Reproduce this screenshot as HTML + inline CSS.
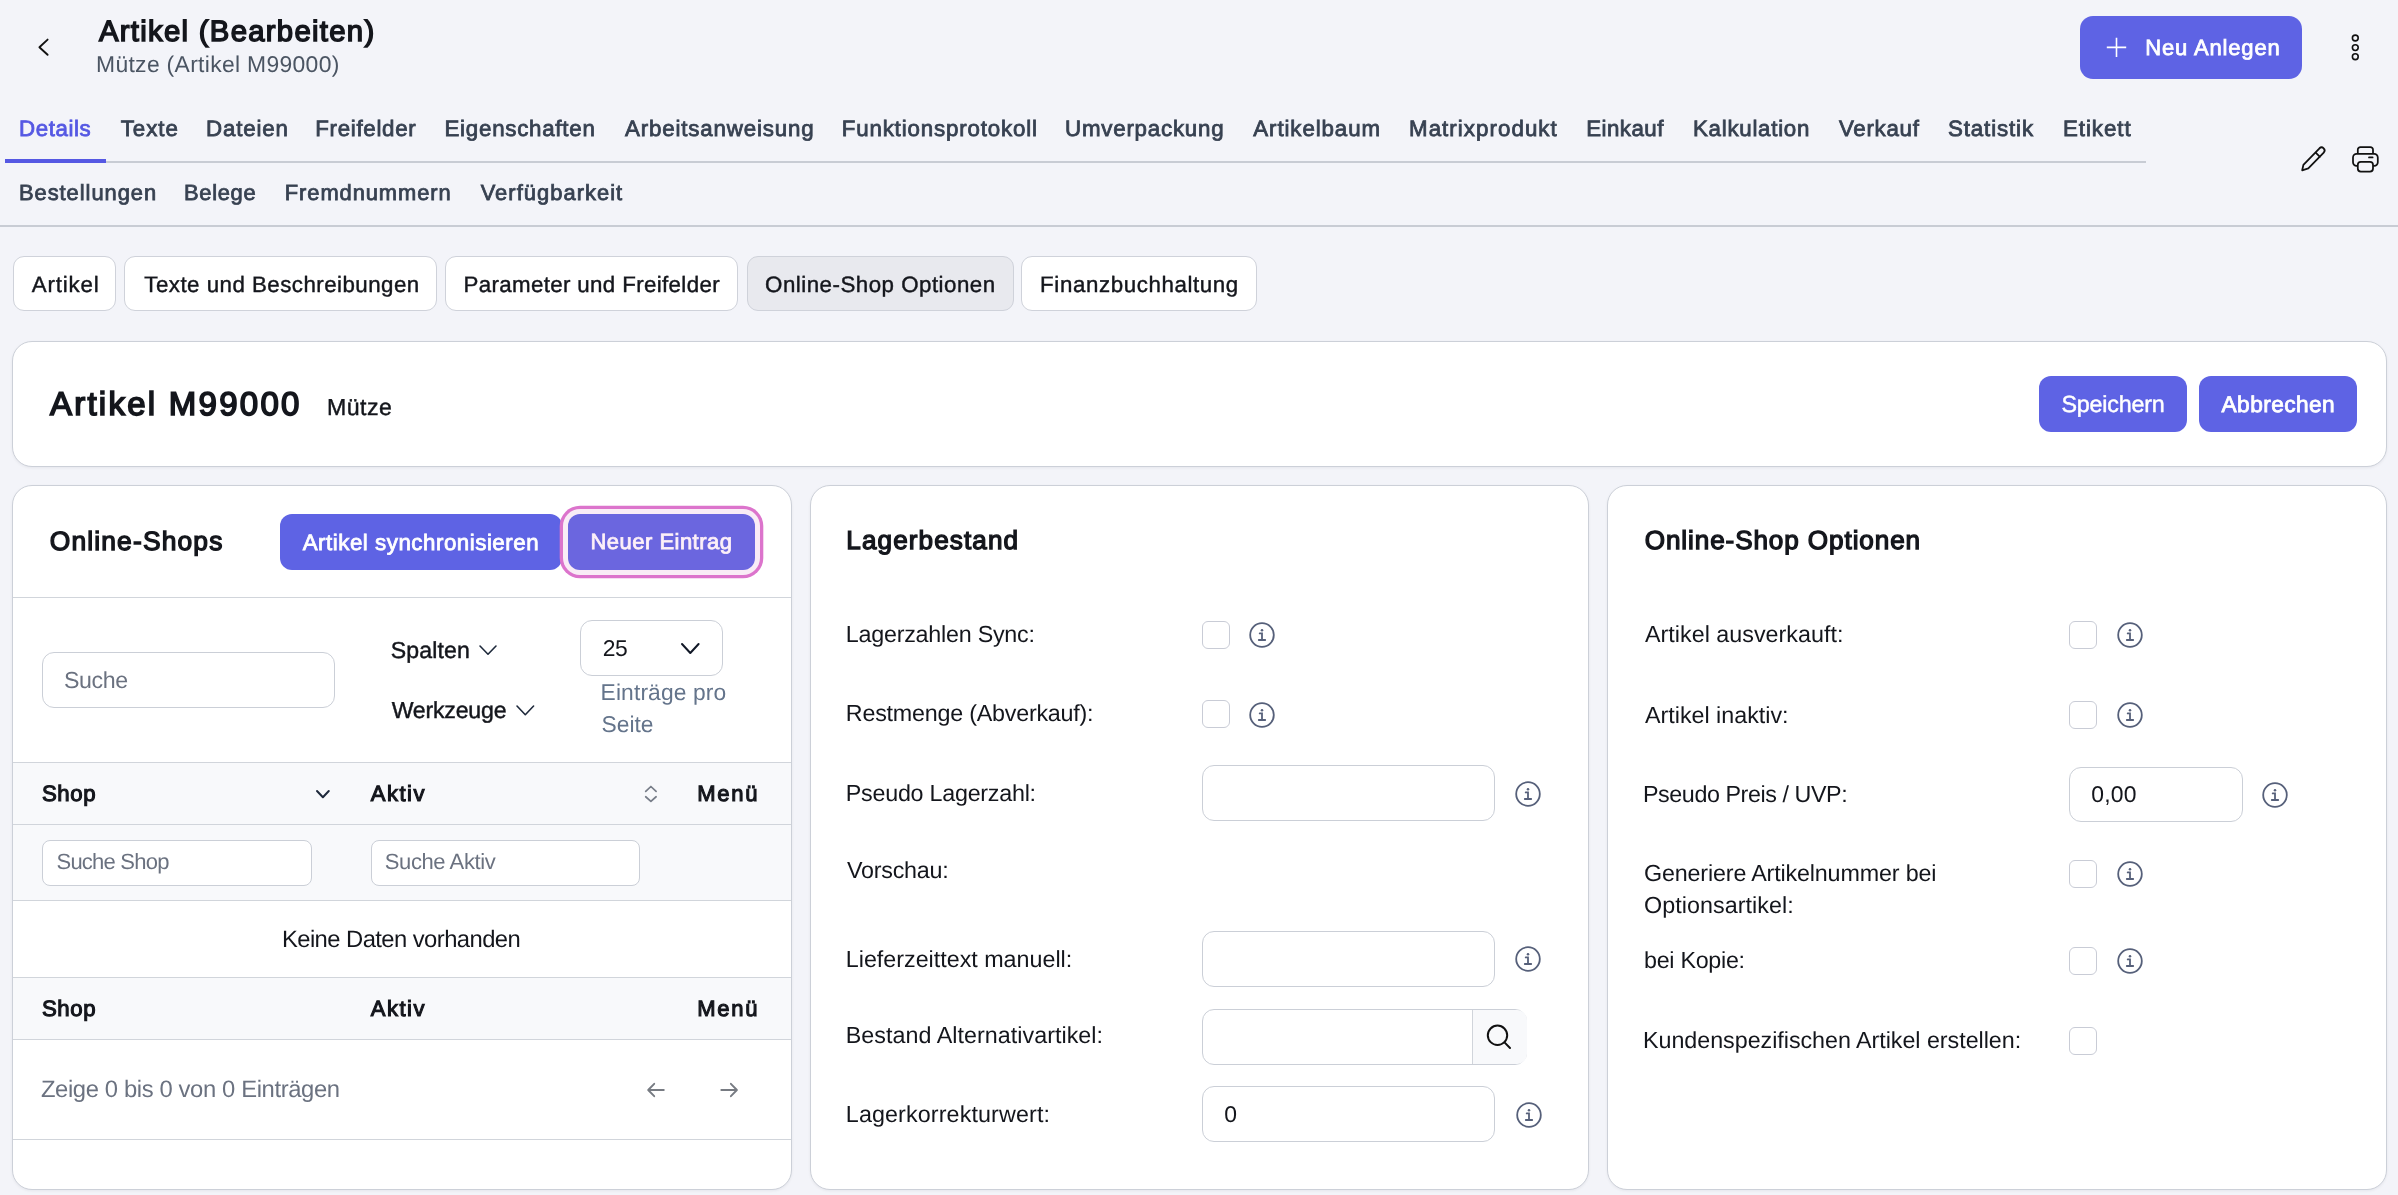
<!DOCTYPE html>
<html><head><meta charset="utf-8"><title>Artikel (Bearbeiten)</title>
<style>
html,body{margin:0;padding:0}
body{width:2398px;height:1195px;overflow:hidden;position:relative;background:#f3f4f9;font-family:'Liberation Sans', sans-serif}
.t{position:absolute;white-space:nowrap;text-rendering:geometricPrecision}
svg{overflow:visible}
</style></head><body>
<svg style="position:absolute;left:30px;top:30px;" width="30" height="34" viewBox="0 0 30 34" fill="none"><polyline points="17.6,9.6 9.4,17.2 17.6,24.8" stroke="#111" stroke-width="1.9" stroke-linecap="round" stroke-linejoin="round"/></svg>
<div style="position:absolute;left:2080px;top:16px;width:222px;height:63px;background:#5e63e4;border-radius:13px"></div>
<svg style="position:absolute;left:2100px;top:30px;" width="34" height="34" viewBox="0 0 34 34" fill="none"><path d="M16.5 7.8V27M6.8 17.4H26.2" stroke="#fff" stroke-width="1.6"/></svg>
<svg style="position:absolute;left:2340px;top:26px;" width="30" height="40" viewBox="0 0 30 40" fill="none"><circle cx="15.3" cy="12" r="2.9" stroke="#111" stroke-width="1.6"/><circle cx="15.3" cy="21.6" r="2.9" stroke="#111" stroke-width="1.6"/><circle cx="15.3" cy="30.7" r="2.9" stroke="#111" stroke-width="1.6"/></svg>
<div style="position:absolute;left:5px;top:161px;width:2141px;height:2px;background:#c8ccd4"></div>
<div style="position:absolute;left:5px;top:159px;width:101px;height:4px;background:#5558e3"></div>
<div style="position:absolute;left:0px;top:225px;width:2398px;height:2px;background:#c8ccd4"></div>
<svg style="position:absolute;left:2290px;top:140px;" width="40" height="40" viewBox="0 0 40 40" fill="none"><path d="M29.48 8.28L13.4 24.9L12.2 30.3L18.3 28.4L33.72 12.52A3 3 0 0 0 29.48 8.28ZM25.68 12.58L29.92 16.82" stroke="#111" stroke-width="1.8" stroke-linejoin="round" stroke-linecap="round"/></svg>
<svg style="position:absolute;left:2348px;top:141px;" width="36" height="36" viewBox="0 0 36 36" fill="none"><path d="M9.8 13V8.8a2.6 2.6 0 0 1 2.6-2.6h10a2.6 2.6 0 0 1 2.6 2.6V13" stroke="#111" stroke-width="1.75"/><path d="M9.6 24.9H8.6a3.6 3.6 0 0 1-3.6-3.6v-4.8a3.6 3.6 0 0 1 3.6-3.6h17.6a3.6 3.6 0 0 1 3.6 3.6v4.8a3.6 3.6 0 0 1-3.6 3.6h-1" stroke="#111" stroke-width="1.75"/><rect x="9.8" y="20.8" width="15.2" height="9.7" rx="3" stroke="#111" stroke-width="1.75"/><path d="M21 16.4h3.6" stroke="#111" stroke-width="1.75" stroke-linecap="round"/></svg>
<div style="position:absolute;left:12.5px;top:256.3px;width:103.9px;height:55.1px;box-sizing:border-box;border:1px solid #cfd2da;border-radius:11px;background:#fff"></div>
<div style="position:absolute;left:124.3px;top:256.3px;width:313.1px;height:55.1px;box-sizing:border-box;border:1px solid #cfd2da;border-radius:11px;background:#fff"></div>
<div style="position:absolute;left:445.3px;top:256.3px;width:293.2px;height:55.1px;box-sizing:border-box;border:1px solid #cfd2da;border-radius:11px;background:#fff"></div>
<div style="position:absolute;left:746.9px;top:256.3px;width:266.8px;height:55.1px;box-sizing:border-box;border:1px solid #cfd2da;border-radius:11px;background:#e8e9ee"></div>
<div style="position:absolute;left:1021.4px;top:256.3px;width:235.2px;height:55.1px;box-sizing:border-box;border:1px solid #cfd2da;border-radius:11px;background:#fff"></div>
<div style="position:absolute;left:12px;top:341px;width:2375px;height:126px;box-sizing:border-box;border:1px solid #ccd0d8;border-radius:20px;background:#fff;box-shadow:0 1px 3px rgba(16,24,40,0.06)"></div>
<div style="position:absolute;left:2039px;top:376px;width:148px;height:56px;background:#5e63e4;border-radius:12px"></div>
<div style="position:absolute;left:2199px;top:376px;width:158px;height:56px;background:#5e63e4;border-radius:12px"></div>
<div style="position:absolute;left:12px;top:485px;width:780px;height:705px;box-sizing:border-box;border:1px solid #ccd0d8;border-radius:20px;background:#fff;box-shadow:0 1px 3px rgba(16,24,40,0.06)"></div>
<div style="position:absolute;left:810px;top:485px;width:779px;height:705px;box-sizing:border-box;border:1px solid #ccd0d8;border-radius:20px;background:#fff;box-shadow:0 1px 3px rgba(16,24,40,0.06)"></div>
<div style="position:absolute;left:1607px;top:485px;width:780px;height:705px;box-sizing:border-box;border:1px solid #ccd0d8;border-radius:20px;background:#fff;box-shadow:0 1px 3px rgba(16,24,40,0.06)"></div>
<div style="position:absolute;left:280px;top:514px;width:281.5px;height:56px;background:#5e63e4;border-radius:12px"></div>
<div style="position:absolute;left:568px;top:514px;width:187px;height:56px;background:#6b66df;border-radius:12px;box-shadow:0 0 0 5px #f9ecf6,0 0 0 8.3px #dc74cc"></div>
<div style="position:absolute;left:13px;top:597px;width:778px;height:1px;background:#d1d5db"></div>
<div style="position:absolute;left:42.3px;top:652.3px;width:292.7px;height:56.2px;box-sizing:border-box;border:1px solid #cbcfd7;border-radius:12px;background:#fff"></div>
<svg style="position:absolute;left:477.5px;top:644.3px;" width="20" height="12.2" viewBox="0 0 20 12.2" fill="none"><polyline points="2,2 10.0,10.2 18,2" stroke="#1e293b" stroke-width="1.6" stroke-linecap="round" stroke-linejoin="round"/></svg>
<svg style="position:absolute;left:514.6px;top:703.5px;" width="20.6" height="12.7" viewBox="0 0 20.6 12.7" fill="none"><polyline points="2,2 10.3,10.7 18.6,2" stroke="#1e293b" stroke-width="1.6" stroke-linecap="round" stroke-linejoin="round"/></svg>
<div style="position:absolute;left:580.4px;top:620px;width:142.3px;height:56px;box-sizing:border-box;border:1px solid #cbcfd7;border-radius:12px;background:#fff;border-radius:12px"></div>
<svg style="position:absolute;left:679.6px;top:641.8px;" width="20.6" height="13" viewBox="0 0 20.6 13" fill="none"><polyline points="2,2 10.3,11 18.6,2" stroke="#111827" stroke-width="2" stroke-linecap="round" stroke-linejoin="round"/></svg>
<div style="position:absolute;left:13px;top:762px;width:778px;height:1px;background:#d1d5db"></div>
<div style="position:absolute;left:13px;top:763px;width:778px;height:214px;background:#f8f9fb"></div>
<div style="position:absolute;left:13px;top:824px;width:778px;height:1px;background:#d1d5db"></div>
<div style="position:absolute;left:13px;top:900px;width:778px;height:1px;background:#d1d5db"></div>
<div style="position:absolute;left:13px;top:901px;width:778px;height:76px;background:#fff"></div>
<div style="position:absolute;left:13px;top:977px;width:778px;height:1px;background:#d1d5db"></div>
<div style="position:absolute;left:13px;top:978px;width:778px;height:61px;background:#f8f9fb"></div>
<div style="position:absolute;left:13px;top:1039px;width:778px;height:1px;background:#d1d5db"></div>
<div style="position:absolute;left:13px;top:1139px;width:778px;height:1px;background:#d1d5db"></div>
<svg style="position:absolute;left:315px;top:789px;" width="15.8" height="10.2" viewBox="0 0 15.8 10.2" fill="none"><polyline points="2,2 7.9,8.2 13.8,2" stroke="#1e293b" stroke-width="2" stroke-linecap="round" stroke-linejoin="round"/></svg>
<svg style="position:absolute;left:640px;top:781px;" width="22" height="26" viewBox="0 0 22 26" fill="none"><polyline points="5.7,10.4 10.9,5.5 16.1,10.4" stroke="#777d88" stroke-width="1.7" stroke-linecap="round" stroke-linejoin="round"/><polyline points="5.7,15.75 10.9,20.4 16.1,15.75" stroke="#777d88" stroke-width="1.7" stroke-linecap="round" stroke-linejoin="round"/></svg>
<div style="position:absolute;left:42.2px;top:840px;width:269.4px;height:45.6px;box-sizing:border-box;border:1px solid #cbcfd7;border-radius:12px;background:#fff;border-radius:8px"></div>
<div style="position:absolute;left:370.5px;top:840px;width:269.0px;height:45.6px;box-sizing:border-box;border:1px solid #cbcfd7;border-radius:12px;background:#fff;border-radius:8px"></div>
<svg style="position:absolute;left:640px;top:1076px;" width="30" height="28" viewBox="0 0 30 28" fill="none"><path d="M23.8 14H8.5M14.2 7.8L8.2 14l6 6.2" stroke="#777b82" stroke-width="1.9" stroke-linecap="round" stroke-linejoin="round"/></svg>
<svg style="position:absolute;left:714px;top:1076px;" width="30" height="28" viewBox="0 0 30 28" fill="none"><path d="M7.3 14H22.6M16.9 7.8L22.9 14l-6 6.2" stroke="#777b82" stroke-width="1.9" stroke-linecap="round" stroke-linejoin="round"/></svg>
<div style="position:absolute;left:1202px;top:621px;width:28px;height:28px;box-sizing:border-box;border:1.3px solid #c9ccd6;border-radius:6px;background:#fff"></div>
<svg style="position:absolute;left:1247.3px;top:620.2px;" width="30" height="30" viewBox="0 0 30 30" fill="none"><circle cx="15" cy="15" r="11.8" stroke="#56607a" stroke-width="1.8"/><circle cx="15" cy="10.2" r="1.25" fill="#56607a"/><path d="M12.7 13.4h2.3v6.6M11.8 20h6.4" stroke="#56607a" stroke-width="1.8" stroke-linecap="round"/></svg>
<div style="position:absolute;left:1202px;top:700.3px;width:28px;height:28.0px;box-sizing:border-box;border:1.3px solid #c9ccd6;border-radius:6px;background:#fff"></div>
<svg style="position:absolute;left:1247.3px;top:699.7px;" width="30" height="30" viewBox="0 0 30 30" fill="none"><circle cx="15" cy="15" r="11.8" stroke="#56607a" stroke-width="1.8"/><circle cx="15" cy="10.2" r="1.25" fill="#56607a"/><path d="M12.7 13.4h2.3v6.6M11.8 20h6.4" stroke="#56607a" stroke-width="1.8" stroke-linecap="round"/></svg>
<div style="position:absolute;left:1202.3px;top:765px;width:293.2px;height:56px;box-sizing:border-box;border:1px solid #cbcfd7;border-radius:12px;background:#fff"></div>
<svg style="position:absolute;left:1512.8px;top:779.2px;" width="30" height="30" viewBox="0 0 30 30" fill="none"><circle cx="15" cy="15" r="11.8" stroke="#56607a" stroke-width="1.8"/><circle cx="15" cy="10.2" r="1.25" fill="#56607a"/><path d="M12.7 13.4h2.3v6.6M11.8 20h6.4" stroke="#56607a" stroke-width="1.8" stroke-linecap="round"/></svg>
<div style="position:absolute;left:1202.3px;top:931px;width:293.2px;height:56px;box-sizing:border-box;border:1px solid #cbcfd7;border-radius:12px;background:#fff"></div>
<svg style="position:absolute;left:1512.8px;top:944.2px;" width="30" height="30" viewBox="0 0 30 30" fill="none"><circle cx="15" cy="15" r="11.8" stroke="#56607a" stroke-width="1.8"/><circle cx="15" cy="10.2" r="1.25" fill="#56607a"/><path d="M12.7 13.4h2.3v6.6M11.8 20h6.4" stroke="#56607a" stroke-width="1.8" stroke-linecap="round"/></svg>
<div style="position:absolute;left:1202.3px;top:1009px;width:324.4px;height:56px;box-sizing:border-box;border:1px solid #cbcfd7;border-radius:12px;background:#fff;overflow:hidden"></div>
<div style="position:absolute;left:1471.6px;top:1010px;width:54.1px;height:54px;background:#f8f9fb;border-top-right-radius:10px;border-bottom-right-radius:10px;border-left:1px solid #d1d5db"></div>
<svg style="position:absolute;left:1480px;top:1018px;" width="36" height="36" viewBox="0 0 36 36" fill="none"><circle cx="17.5" cy="17.3" r="9.7" stroke="#111" stroke-width="2"/><path d="M24.5 24.4l5.5 5.6" stroke="#111" stroke-width="2" stroke-linecap="round"/></svg>
<div style="position:absolute;left:1202.3px;top:1086px;width:293.2px;height:56px;box-sizing:border-box;border:1px solid #cbcfd7;border-radius:12px;background:#fff"></div>
<svg style="position:absolute;left:1513.5px;top:1100.2px;" width="30" height="30" viewBox="0 0 30 30" fill="none"><circle cx="15" cy="15" r="11.8" stroke="#56607a" stroke-width="1.8"/><circle cx="15" cy="10.2" r="1.25" fill="#56607a"/><path d="M12.7 13.4h2.3v6.6M11.8 20h6.4" stroke="#56607a" stroke-width="1.8" stroke-linecap="round"/></svg>
<div style="position:absolute;left:2069px;top:621px;width:28px;height:28px;box-sizing:border-box;border:1.3px solid #c9ccd6;border-radius:6px;background:#fff"></div>
<svg style="position:absolute;left:2114.7px;top:620.2px;" width="30" height="30" viewBox="0 0 30 30" fill="none"><circle cx="15" cy="15" r="11.8" stroke="#56607a" stroke-width="1.8"/><circle cx="15" cy="10.2" r="1.25" fill="#56607a"/><path d="M12.7 13.4h2.3v6.6M11.8 20h6.4" stroke="#56607a" stroke-width="1.8" stroke-linecap="round"/></svg>
<div style="position:absolute;left:2069px;top:701px;width:28px;height:28px;box-sizing:border-box;border:1.3px solid #c9ccd6;border-radius:6px;background:#fff"></div>
<svg style="position:absolute;left:2114.7px;top:700.2px;" width="30" height="30" viewBox="0 0 30 30" fill="none"><circle cx="15" cy="15" r="11.8" stroke="#56607a" stroke-width="1.8"/><circle cx="15" cy="10.2" r="1.25" fill="#56607a"/><path d="M12.7 13.4h2.3v6.6M11.8 20h6.4" stroke="#56607a" stroke-width="1.8" stroke-linecap="round"/></svg>
<div style="position:absolute;left:2069px;top:766.8px;width:173.5px;height:55.7px;box-sizing:border-box;border:1px solid #cbcfd7;border-radius:12px;background:#fff"></div>
<svg style="position:absolute;left:2259.9px;top:780.2px;" width="30" height="30" viewBox="0 0 30 30" fill="none"><circle cx="15" cy="15" r="11.8" stroke="#56607a" stroke-width="1.8"/><circle cx="15" cy="10.2" r="1.25" fill="#56607a"/><path d="M12.7 13.4h2.3v6.6M11.8 20h6.4" stroke="#56607a" stroke-width="1.8" stroke-linecap="round"/></svg>
<div style="position:absolute;left:2069px;top:860.2px;width:28px;height:28.0px;box-sizing:border-box;border:1.3px solid #c9ccd6;border-radius:6px;background:#fff"></div>
<svg style="position:absolute;left:2114.7px;top:859.2px;" width="30" height="30" viewBox="0 0 30 30" fill="none"><circle cx="15" cy="15" r="11.8" stroke="#56607a" stroke-width="1.8"/><circle cx="15" cy="10.2" r="1.25" fill="#56607a"/><path d="M12.7 13.4h2.3v6.6M11.8 20h6.4" stroke="#56607a" stroke-width="1.8" stroke-linecap="round"/></svg>
<div style="position:absolute;left:2069px;top:947.3px;width:28px;height:28.0px;box-sizing:border-box;border:1.3px solid #c9ccd6;border-radius:6px;background:#fff"></div>
<svg style="position:absolute;left:2114.7px;top:945.8px;" width="30" height="30" viewBox="0 0 30 30" fill="none"><circle cx="15" cy="15" r="11.8" stroke="#56607a" stroke-width="1.8"/><circle cx="15" cy="10.2" r="1.25" fill="#56607a"/><path d="M12.7 13.4h2.3v6.6M11.8 20h6.4" stroke="#56607a" stroke-width="1.8" stroke-linecap="round"/></svg>
<div style="position:absolute;left:2069px;top:1027.3px;width:28px;height:28.0px;box-sizing:border-box;border:1.3px solid #c9ccd6;border-radius:6px;background:#fff"></div>
<div id="tl" style="position:absolute;left:0;top:0;width:2398px;height:1195px;will-change:transform">
<div class="t" style="left:99px;top:17px;font-size:29.3px;line-height:29.3px;font-weight:400;-webkit-text-stroke-width:1.47px;color:#14161c;letter-spacing:1.284px">Artikel (Bearbeiten)</div>
<div class="t" style="left:96px;top:53px;font-size:22.9px;line-height:22.9px;font-weight:400;color:#4b5563;letter-spacing:0.319px">Mütze (Artikel M99000)</div>
<div class="t" style="left:2145.3px;top:37px;font-size:22.0px;line-height:22.0px;font-weight:400;-webkit-text-stroke-width:0.79px;color:#ffffff;letter-spacing:0.84px">Neu Anlegen</div>
<div class="t" style="left:19px;top:118px;font-size:22.3px;line-height:22.3px;font-weight:400;-webkit-text-stroke-width:0.8px;color:#5558e3;letter-spacing:0.583px">Details</div>
<div class="t" style="left:120.75px;top:118px;font-size:22.3px;line-height:22.3px;font-weight:400;-webkit-text-stroke-width:0.8px;color:#374151;letter-spacing:0.938px">Texte</div>
<div class="t" style="left:206px;top:118px;font-size:22.3px;line-height:22.3px;font-weight:400;-webkit-text-stroke-width:0.8px;color:#374151;letter-spacing:0.833px">Dateien</div>
<div class="t" style="left:315.25px;top:118px;font-size:22.3px;line-height:22.3px;font-weight:400;-webkit-text-stroke-width:0.8px;color:#374151;letter-spacing:0.694px">Freifelder</div>
<div class="t" style="left:444.5px;top:118px;font-size:22.3px;line-height:22.3px;font-weight:400;-webkit-text-stroke-width:0.8px;color:#374151;letter-spacing:0.75px">Eigenschaften</div>
<div class="t" style="left:625px;top:118px;font-size:22.3px;line-height:22.3px;font-weight:400;-webkit-text-stroke-width:0.8px;color:#374151;letter-spacing:0.847px">Arbeitsanweisung</div>
<div class="t" style="left:841.7px;top:118px;font-size:22.3px;line-height:22.3px;font-weight:400;-webkit-text-stroke-width:0.8px;color:#374151;letter-spacing:0.841px">Funktionsprotokoll</div>
<div class="t" style="left:1065px;top:118px;font-size:22.3px;line-height:22.3px;font-weight:400;-webkit-text-stroke-width:0.8px;color:#374151;letter-spacing:0.791px">Umverpackung</div>
<div class="t" style="left:1253.3px;top:118px;font-size:22.3px;line-height:22.3px;font-weight:400;-webkit-text-stroke-width:0.8px;color:#374151;letter-spacing:0.9px">Artikelbaum</div>
<div class="t" style="left:1409px;top:118px;font-size:22.3px;line-height:22.3px;font-weight:400;-webkit-text-stroke-width:0.8px;color:#374151;letter-spacing:1.058px">Matrixprodukt</div>
<div class="t" style="left:1586.3px;top:118px;font-size:22.3px;line-height:22.3px;font-weight:400;-webkit-text-stroke-width:0.8px;color:#374151;letter-spacing:0.45px">Einkauf</div>
<div class="t" style="left:1693px;top:118px;font-size:22.3px;line-height:22.3px;font-weight:400;-webkit-text-stroke-width:0.8px;color:#374151;letter-spacing:0.73px">Kalkulation</div>
<div class="t" style="left:1839px;top:118px;font-size:22.3px;line-height:22.3px;font-weight:400;-webkit-text-stroke-width:0.8px;color:#374151;letter-spacing:0.717px">Verkauf</div>
<div class="t" style="left:1948px;top:118px;font-size:22.3px;line-height:22.3px;font-weight:400;-webkit-text-stroke-width:0.8px;color:#374151;letter-spacing:0.875px">Statistik</div>
<div class="t" style="left:2063px;top:118px;font-size:22.3px;line-height:22.3px;font-weight:400;-webkit-text-stroke-width:0.8px;color:#374151;letter-spacing:0.95px">Etikett</div>
<div class="t" style="left:19px;top:182px;font-size:21.9px;line-height:21.9px;font-weight:400;-webkit-text-stroke-width:0.79px;color:#374151;letter-spacing:0.955px">Bestellungen</div>
<div class="t" style="left:184px;top:182px;font-size:21.9px;line-height:21.9px;font-weight:400;-webkit-text-stroke-width:0.79px;color:#374151;letter-spacing:0.7px">Belege</div>
<div class="t" style="left:284.75px;top:182px;font-size:21.9px;line-height:21.9px;font-weight:400;-webkit-text-stroke-width:0.79px;color:#374151;letter-spacing:0.932px">Fremdnummern</div>
<div class="t" style="left:480.7px;top:182px;font-size:21.9px;line-height:21.9px;font-weight:400;-webkit-text-stroke-width:0.79px;color:#374151;letter-spacing:1.042px">Verfügbarkeit</div>
<div class="t" style="left:31.7px;top:274px;font-size:22.3px;line-height:22.3px;font-weight:400;-webkit-text-stroke-width:0.42px;color:#14161c;letter-spacing:0.85px">Artikel</div>
<div class="t" style="left:144.3px;top:274px;font-size:22.3px;line-height:22.3px;font-weight:400;-webkit-text-stroke-width:0.42px;color:#14161c;letter-spacing:0.474px">Texte und Beschreibungen</div>
<div class="t" style="left:463.5px;top:274px;font-size:22.3px;line-height:22.3px;font-weight:400;-webkit-text-stroke-width:0.42px;color:#14161c;letter-spacing:0.357px">Parameter und Freifelder</div>
<div class="t" style="left:765.1px;top:274px;font-size:22.3px;line-height:22.3px;font-weight:400;-webkit-text-stroke-width:0.42px;color:#14161c;letter-spacing:0.495px">Online-Shop Optionen</div>
<div class="t" style="left:1040.1px;top:274px;font-size:22.3px;line-height:22.3px;font-weight:400;-webkit-text-stroke-width:0.42px;color:#14161c;letter-spacing:0.606px">Finanzbuchhaltung</div>
<div class="t" style="left:49.9px;top:387px;font-size:33.0px;line-height:33.0px;font-weight:400;-webkit-text-stroke-width:1.65px;color:#14161c;letter-spacing:2.262px">Artikel M99000</div>
<div class="t" style="left:327px;top:396px;font-size:23.1px;line-height:23.1px;font-weight:400;-webkit-text-stroke-width:0.44px;color:#14161c;letter-spacing:0.5px">Mütze</div>
<div class="t" style="left:2061.4px;top:393px;font-size:23.3px;line-height:23.3px;font-weight:400;-webkit-text-stroke-width:0.44px;color:#ffffff;letter-spacing:-0.2px">Speichern</div>
<div class="t" style="left:2221.5px;top:393px;font-size:22.7px;line-height:22.7px;font-weight:400;-webkit-text-stroke-width:0.82px;color:#ffffff;letter-spacing:0.438px">Abbrechen</div>
<div class="t" style="left:49.7px;top:528px;font-size:26.4px;line-height:26.4px;font-weight:400;-webkit-text-stroke-width:1.32px;color:#14161c;letter-spacing:1.164px">Online-Shops</div>
<div class="t" style="left:302.7px;top:532px;font-size:22.3px;line-height:22.3px;font-weight:400;-webkit-text-stroke-width:0.8px;color:#ffffff;letter-spacing:0.527px">Artikel synchronisieren</div>
<div class="t" style="left:590.5px;top:531px;font-size:22.0px;line-height:22.0px;font-weight:400;-webkit-text-stroke-width:0.79px;color:#fdf0f8;letter-spacing:0.475px">Neuer Eintrag</div>
<div class="t" style="left:64px;top:669px;font-size:23.2px;line-height:23.2px;font-weight:400;color:#6b7280;letter-spacing:-0.425px">Suche</div>
<div class="t" style="left:390.7px;top:639px;font-size:23.1px;line-height:23.1px;font-weight:400;-webkit-text-stroke-width:0.44px;color:#14161c;letter-spacing:0.15px">Spalten</div>
<div class="t" style="left:391.7px;top:699px;font-size:23.1px;line-height:23.1px;font-weight:400;-webkit-text-stroke-width:0.44px;color:#14161c;letter-spacing:-0.2px">Werkzeuge</div>
<div class="t" style="left:602.7px;top:637px;font-size:22.9px;line-height:22.9px;font-weight:400;color:#14161c;letter-spacing:-0.3px">25</div>
<div class="t" style="left:600.6px;top:681px;font-size:22.8px;line-height:22.8px;font-weight:400;color:#64748b;letter-spacing:0.127px">Einträge pro</div>
<div class="t" style="left:601.6px;top:713px;font-size:22.8px;line-height:22.8px;font-weight:400;color:#64748b;letter-spacing:-0.025px">Seite</div>
<div class="t" style="left:41.9px;top:783px;font-size:22.2px;line-height:22.2px;font-weight:400;-webkit-text-stroke-width:1.11px;color:#14161c;letter-spacing:0.6px">Shop</div>
<div class="t" style="left:370.7px;top:783px;font-size:22.0px;line-height:22.0px;font-weight:400;-webkit-text-stroke-width:1.1px;color:#14161c;letter-spacing:1.55px">Aktiv</div>
<div class="t" style="left:697.3px;top:783px;font-size:22.0px;line-height:22.0px;font-weight:400;-webkit-text-stroke-width:1.1px;color:#14161c;letter-spacing:1.7px">Menü</div>
<div class="t" style="left:56.5px;top:851px;font-size:22.0px;line-height:22.0px;font-weight:400;color:#6b7280;letter-spacing:-0.778px">Suche Shop</div>
<div class="t" style="left:384.8px;top:851px;font-size:22.0px;line-height:22.0px;font-weight:400;color:#6b7280;letter-spacing:-0.41px">Suche Aktiv</div>
<div class="t" style="left:281.9px;top:928px;font-size:23.8px;line-height:23.8px;font-weight:400;color:#14161c;letter-spacing:-0.56px">Keine Daten vorhanden</div>
<div class="t" style="left:41.9px;top:998px;font-size:22.2px;line-height:22.2px;font-weight:400;-webkit-text-stroke-width:1.11px;color:#14161c;letter-spacing:0.6px">Shop</div>
<div class="t" style="left:370.7px;top:998px;font-size:22.0px;line-height:22.0px;font-weight:400;-webkit-text-stroke-width:1.1px;color:#14161c;letter-spacing:1.55px">Aktiv</div>
<div class="t" style="left:697.3px;top:998px;font-size:22.0px;line-height:22.0px;font-weight:400;-webkit-text-stroke-width:1.1px;color:#14161c;letter-spacing:1.7px">Menü</div>
<div class="t" style="left:40.9px;top:1078px;font-size:23.8px;line-height:23.8px;font-weight:400;color:#6b7280;letter-spacing:-0.371px">Zeige 0 bis 0 von 0 Einträgen</div>
<div class="t" style="left:846.3px;top:527px;font-size:26.1px;line-height:26.1px;font-weight:400;-webkit-text-stroke-width:1.31px;color:#14161c;letter-spacing:1.109px">Lagerbestand</div>
<div class="t" style="left:845.8px;top:623px;font-size:23.3px;line-height:23.3px;font-weight:400;color:#14161c;letter-spacing:-0.237px">Lagerzahlen Sync:</div>
<div class="t" style="left:845.8px;top:702px;font-size:23.3px;line-height:23.3px;font-weight:400;color:#14161c;letter-spacing:-0.224px">Restmenge (Abverkauf):</div>
<div class="t" style="left:845.8px;top:782px;font-size:23.3px;line-height:23.3px;font-weight:400;color:#14161c;letter-spacing:-0.25px">Pseudo Lagerzahl:</div>
<div class="t" style="left:847.1px;top:859px;font-size:23.3px;line-height:23.3px;font-weight:400;color:#14161c;letter-spacing:-0.262px">Vorschau:</div>
<div class="t" style="left:845.8px;top:948px;font-size:23.3px;line-height:23.3px;font-weight:400;color:#14161c;letter-spacing:-0.009px">Lieferzeittext manuell:</div>
<div class="t" style="left:845.8px;top:1024px;font-size:23.3px;line-height:23.3px;font-weight:400;color:#14161c;letter-spacing:0.032px">Bestand Alternativartikel:</div>
<div class="t" style="left:845.8px;top:1103px;font-size:23.3px;line-height:23.3px;font-weight:400;color:#14161c;letter-spacing:0.122px">Lagerkorrekturwert:</div>
<div class="t" style="left:1224.2px;top:1103px;font-size:22.9px;line-height:22.9px;font-weight:400;color:#14161c;letter-spacing:0px">0</div>
<div class="t" style="left:1644.7px;top:527px;font-size:26.1px;line-height:26.1px;font-weight:400;-webkit-text-stroke-width:1.31px;color:#14161c;letter-spacing:0.905px">Online-Shop Optionen</div>
<div class="t" style="left:1645px;top:623px;font-size:23.3px;line-height:23.3px;font-weight:400;color:#14161c;letter-spacing:0.016px">Artikel ausverkauft:</div>
<div class="t" style="left:1645px;top:704px;font-size:23.3px;line-height:23.3px;font-weight:400;color:#14161c;letter-spacing:-0.013px">Artikel inaktiv:</div>
<div class="t" style="left:1643px;top:783px;font-size:23.3px;line-height:23.3px;font-weight:400;color:#14161c;letter-spacing:-0.428px">Pseudo Preis / UVP:</div>
<div class="t" style="left:2091.3px;top:783px;font-size:22.9px;line-height:22.9px;font-weight:400;color:#14161c;letter-spacing:0.233px">0,00</div>
<div class="t" style="left:1644px;top:862px;font-size:23.3px;line-height:23.3px;font-weight:400;color:#14161c;letter-spacing:-0.158px">Generiere Artikelnummer bei</div>
<div class="t" style="left:1644px;top:894px;font-size:23.3px;line-height:23.3px;font-weight:400;color:#14161c;letter-spacing:0.064px">Optionsartikel:</div>
<div class="t" style="left:1644px;top:949px;font-size:23.3px;line-height:23.3px;font-weight:400;color:#14161c;letter-spacing:-0.289px">bei Kopie:</div>
<div class="t" style="left:1643px;top:1029px;font-size:23.3px;line-height:23.3px;font-weight:400;color:#14161c;letter-spacing:-0.036px">Kundenspezifischen Artikel erstellen:</div>
</div>
</body></html>
